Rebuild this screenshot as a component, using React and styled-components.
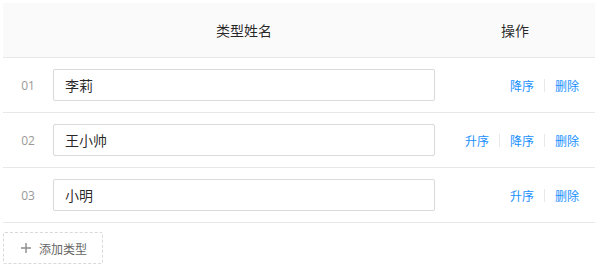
import React from "react";
import styled, { createGlobalStyle } from "styled-components";

const GlobalStyle = createGlobalStyle`
  html, body {
    margin: 0;
    padding: 0;
    background: #fff;
    font-family: "Noto Sans CJK SC", "Noto Sans", sans-serif;
  }
`;

const rows = [
  { no: "01", name: "李莉", actions: ["降序", "删除"] },
  { no: "02", name: "王小帅", actions: ["升序", "降序", "删除"] },
  { no: "03", name: "小明", actions: ["升序", "删除"] },
];

const App = () => {
  return (
    <>
      <GlobalStyle />
      <Page>
        <Table>
          <HeadRow>
            <HeadCell />
            <HeadCell>类型姓名</HeadCell>
            <HeadCell>操作</HeadCell>
          </HeadRow>
          {rows.map((row) => (
            <Row key={row.no}>
              <NoCell>{row.no}</NoCell>
              <NameCell>
                <Input defaultValue={row.name} />
              </NameCell>
              <ActionCell>
                {row.actions.map((a, i) => (
                  <React.Fragment key={a}>
                    {i > 0 && <Divider />}
                    <Link>{a}</Link>
                  </React.Fragment>
                ))}
              </ActionCell>
            </Row>
          ))}
        </Table>
        <AddButton>
          <svg width="10" height="10" viewBox="0 0 10 10">
            <path d="M5 0v10M0 5h10" stroke="#8c8c8c" strokeWidth="1.4" />
          </svg>
          添加类型
        </AddButton>
      </Page>
    </>
  );
};

const Page = styled.div`
  padding: 3px 21px 0 3px;
`;

const Table = styled.div`
  display: flex;
  flex-direction: column;
`;

const rowGrid = `
  display: grid;
  grid-template-columns: 50px 382px 1fr;
  border-bottom: 1px solid #e8e8e8;
`;

const HeadRow = styled.div`
  ${rowGrid}
  height: 54px;
  background: #fafafa;
`;

const HeadCell = styled.div`
  display: flex;
  align-items: center;
  justify-content: center;
  font-size: 14px;
  color: rgba(0, 0, 0, 0.85);
`;

const Row = styled.div`
  ${rowGrid}
  height: 54px;
`;

const NoCell = styled.div`
  display: flex;
  align-items: center;
  justify-content: center;
  font-size: 12px;
  color: #999;
  font-family: "Open Sans", "Noto Sans", sans-serif;
`;

const NameCell = styled.div`
  display: flex;
  align-items: center;
`;

const Input = styled.input`
  box-sizing: border-box;
  width: 100%;
  height: 32px;
  padding: 0 11px;
  border: 1px solid #d9d9d9;
  border-radius: 2px;
  font-family: "Noto Sans CJK SC", "Noto Sans", sans-serif;
  font-size: 14px;
  color: rgba(0, 0, 0, 0.85);
  outline: none;
`;

const ActionCell = styled.div`
  display: flex;
  align-items: center;
  justify-content: flex-end;
  padding-right: 16px;
`;

const Link = styled.span`
  font-size: 12px;
  color: #1890ff;
  cursor: pointer;
`;

const Divider = styled.span`
  width: 1px;
  height: 13px;
  margin: 0 10px;
  background: #e8e8e8;
`;

const AddButton = styled.button`
  display: flex;
  align-items: center;
  gap: 8px;
  box-sizing: border-box;
  width: 100px;
  height: 32px;
  margin-top: 9px;
  padding: 0 0 0 17px;
  border: 1px dashed #d9d9d9;
  border-radius: 2px;
  background: #fff;
  font-family: "Noto Sans CJK SC", "Noto Sans", sans-serif;
  font-size: 12px;
  color: #666;
  cursor: pointer;
`;

export default App;
